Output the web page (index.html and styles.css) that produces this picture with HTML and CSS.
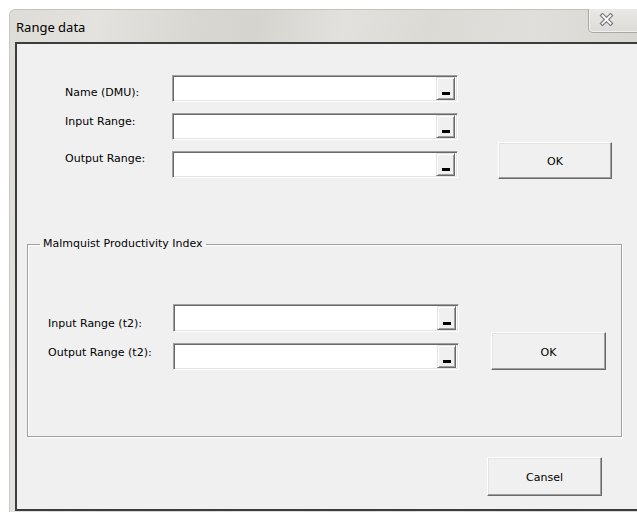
FILE: index.html
```html
<!DOCTYPE html>
<html lang="en">
<head>
<meta charset="utf-8">
<title>Range data</title>
<link rel="stylesheet" href="styles.css">
</head>
<body>
<div class="window">
  <div class="titlebar">
    <span class="title">Range data</span>
    <button class="close" type="button" aria-label="Close">
      <svg width="15" height="13" viewBox="0 0 15 13" aria-hidden="true">
        <path d="M3.5 2.5 L11.5 10.5 M11.5 2.5 L3.5 10.5" stroke="#7c7c7c" stroke-width="4.2" stroke-linecap="square" fill="none"/>
        <path d="M3.5 2.5 L11.5 10.5 M11.5 2.5 L3.5 10.5" stroke="#fdfdfd" stroke-width="1.8" stroke-linecap="square" fill="none"/>
      </svg>
    </button>
  </div>
  <div class="client">
    <div class="range-grid main">
      <label class="lbl l-name">Name (DMU):</label>
      <div class="refedit r1"><span class="field"></span><span class="pick"><i></i></span></div>
      <label class="lbl l-in">Input Range:</label>
      <div class="refedit r2"><span class="field"></span><span class="pick"><i></i></span></div>
      <label class="lbl l-out">Output Range:</label>
      <div class="refedit r3"><span class="field"></span><span class="pick"><i></i></span></div>
      <button class="btn ok-main" type="button">OK</button>
    </div>

    <fieldset class="frame">
      <legend>Malmquist Productivity Index</legend>
      <div class="range-grid t2">
        <label class="lbl l-in2">Input Range (t2):</label>
        <div class="refedit r1 tall"><span class="field"></span><span class="pick"><i></i></span></div>
        <label class="lbl l-out2">Output Range (t2):</label>
        <div class="refedit r2"><span class="field"></span><span class="pick"><i></i></span></div>
        <button class="btn ok-t2" type="button">OK</button>
      </div>
    </fieldset>

    <button class="btn cancel" type="button">Cansel</button>
  </div>
</div>
</body>
</html>
```

FILE: styles.css
```css
* {
  box-sizing: border-box;
}

html,
body {
  margin: 0;
  height: 100%;
  overflow: hidden;
  background: #fff;
}

body {
  padding: 9px 0 0 9px;
  font-family: "DejaVu Sans", Tahoma, sans-serif;
  font-size: 11px;
  color: #000;
}

/* window chrome */
.window {
  width: 643px;
  height: 503px;
  padding: 0 6px;
  border-radius: 6px 6px 0 0;
  border-top: 1px solid #c4c2bd;
  border-left: 1px solid #c9c7c2;
  background:
    linear-gradient(100deg,
      #dedcd7 0%, #e3e2de 12%, #d9d7d2 26%, #d6d4cf 34%,
      #e2e1dd 46%, #dcdad5 58%, #e0dfdb 72%, #d9d7d2 86%, #dedcd8 100%);
  display: flex;
  flex-direction: column;
}

.titlebar {
  height: 32px;
  display: flex;
  align-items: flex-start;
  margin-left: -1px;
}

.title {
  padding: 9px 0 0 1px;
  font-family: "Noto Sans", "Open Sans", sans-serif;
  font-size: 13px;
  line-height: 17px;
  color: #000;
}

.close {
  margin: -1px 0 0 auto;
  width: 58px;
  height: 24px;
  padding: 0 0 2px 10px;
  border: 1px solid #a9a8a4;
  border-top: 0;
  border-radius: 0 0 0 5px;
  background: linear-gradient(#e9e8e5, #dddbd7);
  box-shadow: inset 1px 0 0 #f4f3f1, inset 0 -1px 0 #f1f0ee;
  display: flex;
  align-items: center;
  justify-content: flex-start;
}

.client {
  height: 469px;
  margin-left: -1px;
  border: 2px solid #3c3c3c;
  border-right: 0;
  background: #f0f0f0;
  display: flex;
  flex-direction: column;
  align-items: flex-start;
}

/* label + range picker rows; the last column holds the OK button */
.range-grid {
  display: grid;
  align-items: start;
  row-gap: 11px;
}

.range-grid.main {
  margin: 31px 0 0 48px;
  grid-template-columns: 107px 286px 154px;
  grid-template-rows: 27px 27px 27px;
}

.range-grid.t2 {
  margin: 53px 0 0 20px;
  grid-template-columns: 125px 286px 147px;
  grid-template-rows: 28px 27px;
}

.lbl {
  grid-column: 1;
  line-height: 14px;
  white-space: nowrap;
}

.l-name { grid-row: 1; margin-top: 11px; }
.l-in { grid-row: 2; margin-top: 2px; }
.l-out { grid-row: 3; margin-top: 1px; }
.l-in2 { grid-row: 1; margin-top: 13px; }
.l-out2 { grid-row: 2; margin-top: 3px; }

.refedit {
  grid-column: 2;
  height: 27px;
  display: flex;
  background: #fff;
  border: 1px solid;
  border-color: #a0a0a0 #fff #fff #a0a0a0;
  box-shadow: inset 1px 1px 0 #696969, inset -1px -1px 0 #e3e3e3;
  padding: 1px 2px 1px 1px;
}

.refedit.r1 { grid-row: 1; }
.refedit.r2 { grid-row: 2; }
.refedit.r3 { grid-row: 3; }

.refedit.tall {
  height: 28px;
}

.field {
  flex: 1;
}

.pick {
  width: 19px;
  background: #f0f0f0;
  border: 1px solid;
  border-color: #e3e3e3 #696969 #696969 #e3e3e3;
  box-shadow: inset 1px 1px 0 #fff, inset -1px -1px 0 #a0a0a0;
  display: flex;
  align-items: flex-end;
  padding: 0 0 4px 5px;
}

.pick i {
  display: block;
  width: 8px;
  height: 3px;
  background: #000;
}

/* push buttons */
.btn {
  font-family: "DejaVu Sans", Tahoma, sans-serif;
  font-size: 11px;
  color: #000;
  background: #f0f0f0;
  border: 1px solid;
  border-color: #fff #696969 #696969 #fff;
  box-shadow: inset -1px -1px 0 #a0a0a0, inset 1px 1px 0 #e3e3e3;
  padding: 2px 0 0;
}

.ok-main {
  grid-column: 3;
  grid-row: 2 / 4;
  align-self: end;
  justify-self: end;
  width: 114px;
  height: 37px;
  margin-bottom: -1px;
}

.ok-t2 {
  grid-column: 3;
  grid-row: 1 / 3;
  align-self: end;
  justify-self: end;
  width: 115px;
  height: 38px;
}

/* etched group frame */
.frame {
  margin: 59px 0 0 10px;
  width: 595px;
  padding: 0 0 66px;
  border: 1px solid #a0a0a0;
  box-shadow: 1px 1px 0 #fff, inset 1px 1px 0 #fff;
  min-inline-size: 0;
}

.frame legend {
  margin-left: 12px;
  padding: 0 3px;
  line-height: 14px;
}

.cancel {
  margin: 20px 0 0 470px;
  width: 115px;
  height: 39px;
}
```
